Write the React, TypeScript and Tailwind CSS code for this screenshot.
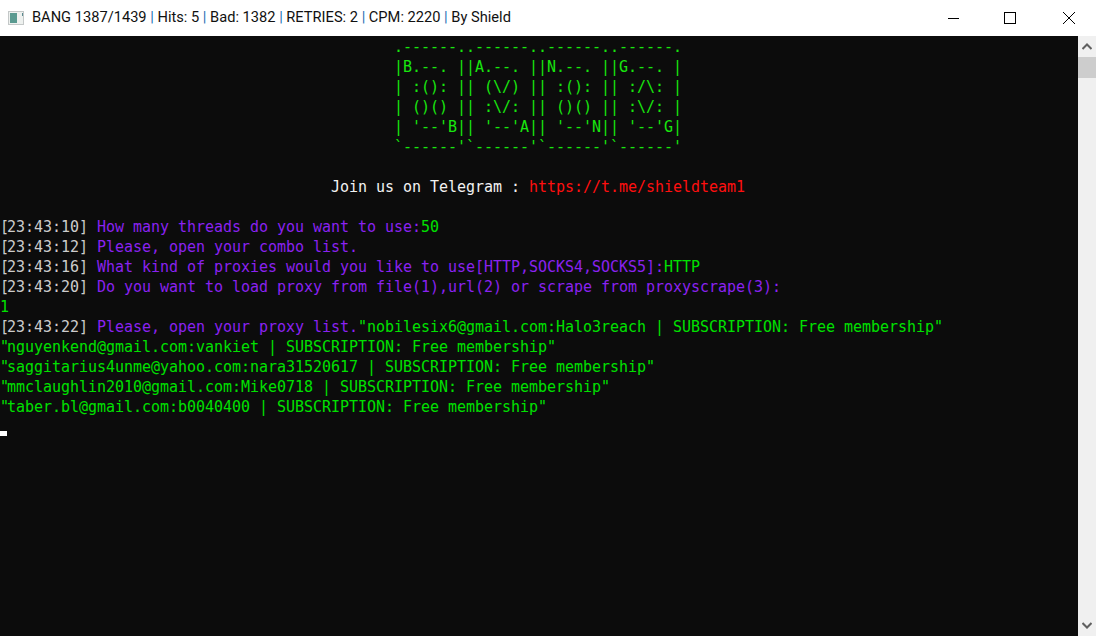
const art = [
  ".------..------..------..------.",
  "|B.--. ||A.--. ||N.--. ||G.--. |",
  "| :(): || (\\/) || :(): || :/\\: |",
  "| ()() || :\\/: || ()() || :\\/: |",
  "| '--'B|| '--'A|| '--'N|| '--'G|",
  "`------'`------'`------'`------'",
]

const log = [
  { time: '23:43:10] ', text: 'How many threads do you want to use:', rest: '50' },
  { time: '23:43:12] ', text: 'Please, open your combo list.', rest: '' },
  { time: '23:43:16] ', text: 'What kind of proxies would you like to use[HTTP,SOCKS4,SOCKS5]:', rest: 'HTTP' },
  { time: '23:43:20] ', text: 'Do you want to load proxy from file(1),url(2) or scrape from proxyscrape(3):', rest: '' },
]

const hits = [
  'nguyenkend@gmail.com:vankiet | SUBSCRIPTION: Free membership"',
  'saggitarius4unme@yahoo.com:nara31520617 | SUBSCRIPTION: Free membership"',
  'mmclaughlin2010@gmail.com:Mike0718 | SUBSCRIPTION: Free membership"',
  'taber.bl@gmail.com:b0040400 | SUBSCRIPTION: Free membership"',
]

function TitleBar() {
  return (
    <div className="h-9 flex items-center bg-white text-black shrink-0">
      <svg width="16" height="16" viewBox="0 0 16 16" className="ml-2 shrink-0">
        <rect x="0" y="1" width="16" height="14" fill="#c4c8c8" />
        <rect x="1" y="2" width="14" height="12" fill="#eef1ef" />
        <rect x="2" y="3" width="7" height="10" fill="#5a9a90" />
        <rect x="14" y="3" width="1" height="3" fill="#5a8a90" />
      </svg>
      <span className="ml-2 text-[14.65px] text-[#111] font-['Roboto',sans-serif] whitespace-pre">
        BANG 1387/1439 <span className="text-[#1b6fb5]">|</span> Hits: 5 <span className="text-[#1b6fb5]">|</span> Bad: 1382 <span className="text-[#1b6fb5]">|</span> RETRIES: 2 <span className="text-[#1b6fb5]">|</span> CPM: 2220 <span className="text-[#1b6fb5]">|</span> By Shield
      </span>
      <div className="ml-auto flex h-full">
        <div className="w-[50px] flex items-center justify-center">
          <div className="w-[11px] h-px bg-black" />
        </div>
        <div className="w-[64px] flex items-center justify-center">
          <div className="w-3 h-3 border border-black" />
        </div>
        <div className="w-[54px] flex items-center justify-center">
          <svg width="12" height="12" viewBox="0 0 12 12" stroke="black" strokeWidth="1">
            <path d="M0 0 L12 12 M12 0 L0 12" />
          </svg>
        </div>
      </div>
    </div>
  )
}

function ScrollBar() {
  return (
    <div className="w-[18px] bg-[#f0f0f0] flex flex-col shrink-0">
      <div className="h-[21px] flex items-center justify-center">
        <svg width="10" height="7" viewBox="0 0 10 7" fill="none" stroke="#606060" strokeWidth="2">
          <path d="M0.5 6 L5 1.5 L9.5 6" />
        </svg>
      </div>
      <div className="h-[21px] bg-[#cdcdcd]" />
      <div className="flex-1" />
      <div className="h-[21px] flex items-center justify-center">
        <svg width="10" height="7" viewBox="0 0 10 7" fill="none" stroke="#606060" strokeWidth="2">
          <path d="M0.5 1 L5 5.5 L9.5 1" />
        </svg>
      </div>
    </div>
  )
}

export default function App() {
  return (
    <div className="w-[1096px] h-[636px] flex flex-col overflow-hidden">
      <TitleBar />
      <div className="flex-1 flex min-h-0">
        <div className="flex-1 bg-[#0c0c0c] font-['DejaVu_Sans_Mono',monospace] text-[15px] tracking-[-0.03px] leading-5 whitespace-pre pt-px text-[#cccccc]">
          {art.map((line, i) => (
            <div key={i} className="pl-[394px] text-[#18e60e]">{line}</div>
          ))}
          <div className="h-5" />
          <div className="pl-[331px] text-[#f2f2f2]">
            Join us on Telegram : <span className="text-[#ff0f0f]">https://t.me/shieldteam1</span>
          </div>
          <div className="h-5" />
          {log.map((row, i) => (
            <div key={i}>
              <span className="-mr-0.5">[</span>{row.time}
              <span className="text-[#8a22f0]">{row.text}</span>
              <span className="text-[#00e000]">{row.rest}</span>
            </div>
          ))}
          <div className="text-[#00e000]">1</div>
          <div>
            <span className="-mr-0.5">[</span>23:43:22] <span className="text-[#8a22f0]">Please, open your proxy list.</span>
            <span className="text-[#00e000]">"nobilesix6@gmail.com:Halo3reach | SUBSCRIPTION: Free membership"</span>
          </div>
          {hits.map((line, i) => (
            <div key={i} className="text-[#00e000]"><span className="-mr-0.5">"</span>{line}</div>
          ))}
          <div className="h-5 flex items-end">
            <div className="w-[7px] h-[5px] bg-white mb-px" />
          </div>
        </div>
        <ScrollBar />
      </div>
    </div>
  )
}
